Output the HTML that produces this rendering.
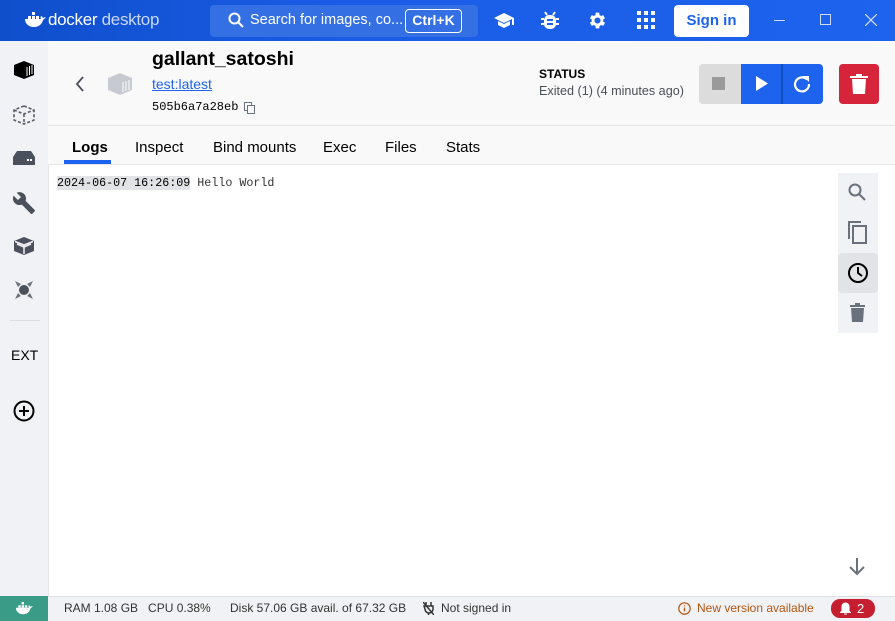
<!DOCTYPE html>
<html><head><meta charset="utf-8"><style>
*{box-sizing:border-box;margin:0;padding:0}
body{width:895px;height:621px;overflow:hidden;font-family:"Liberation Sans",sans-serif;background:#f9f9f9;position:relative;color:#000}
.abs{position:absolute}
.top{left:0;top:0;width:895px;height:41px;background:linear-gradient(90deg,#0f4fcc 0,#1a5ce6 40%,#1d63ed 100%)}
.side{left:0;top:41px;width:48px;height:555px;background:#f1f2f5}
.mono{font-family:"Liberation Mono","DejaVu Sans Mono",monospace}
</style></head><body>
<div class="abs top">
  <svg class="abs" style="left:24px;top:12px" width="22" height="16" viewBox="0 0 22 16"><path d="M1 8h18c1-1 2-2 3-2-1-1-2-1-3 0-1-2-2-2-2-2-1 2 0 3 0 3H1c0 4 3 8 9 8 5 0 8-3 9-7z" fill="#fff"/><rect x="4" y="4" width="3" height="3" fill="#fff"/><rect x="8" y="4" width="3" height="3" fill="#fff"/><rect x="12" y="4" width="3" height="3" fill="#fff"/><rect x="8" y="0" width="3" height="3" fill="#fff"/></svg>
  <div class="abs" style="left:48px;top:10px;font-size:17px;color:#fff;letter-spacing:-0.3px">docker <span style="color:#c9d8f7">desktop</span></div>
  <div class="abs" style="left:210px;top:5px;width:268px;height:32px;background:#3470e4;border-radius:4px"></div>
  <svg class="abs" style="left:228px;top:12px" width="16" height="16" viewBox="0 0 16 16"><circle cx="6.5" cy="6.5" r="5" stroke="#fff" stroke-width="2" fill="none"/><path d="M10 10l5 5" stroke="#fff" stroke-width="2"/></svg>
  <div class="abs" style="left:250px;top:12px;font-size:14.5px;color:#fff">Search for images, co...</div>
  <div class="abs" style="left:405px;top:9px;width:57px;height:24px;border:1.5px solid #fff;border-radius:4px;font-size:14px;font-weight:bold;color:#fff;text-align:center;line-height:21px">Ctrl+K</div>
  <svg class="abs" style="left:494px;top:11px" width="20" height="18" viewBox="0 0 20 18"><path d="M10 2L0 7l10 5 8-4v6h2V7z M4 10v4l6 3 6-3v-4l-6 3z" fill="#fff"/></svg>
  <svg class="abs" style="left:541px;top:10px" width="18" height="20" viewBox="0 0 18 20"><rect x="3" y="5" width="12" height="14" rx="5" fill="#fff"/><path d="M0 9h3M15 9h3M0 14h3M15 14h3M4 2l2 3M14 2l-2 3" stroke="#fff" stroke-width="2"/><path d="M6 10h6M6 14h6" stroke="#1d63ed" stroke-width="2"/></svg>
  <svg class="abs" style="left:587px;top:10px" width="21" height="21" viewBox="0 0 24 24"><path fill="#fff" d="M19.4 13a7.5 7.5 0 000-2l2.1-1.6-2-3.5-2.5 1a7 7 0 00-1.7-1L15 3h-4l-.4 2.9a7 7 0 00-1.7 1l-2.5-1-2 3.5L6.5 11a7.5 7.5 0 000 2l-2.1 1.6 2 3.5 2.5-1a7 7 0 001.7 1L11 21h4l.4-2.9a7 7 0 001.7-1l2.5 1 2-3.5zM13 15.5a3.5 3.5 0 110-7 3.5 3.5 0 010 7z" transform="translate(-1 0)"/></svg>
  <svg class="abs" style="left:637px;top:11px" width="18" height="18" viewBox="0 0 18 18"><g fill="#fff"><rect x="0" y="0" width="4" height="4"/><rect x="7" y="0" width="4" height="4"/><rect x="14" y="0" width="4" height="4"/><rect x="0" y="7" width="4" height="4"/><rect x="7" y="7" width="4" height="4"/><rect x="14" y="7" width="4" height="4"/><rect x="0" y="14" width="4" height="4"/><rect x="7" y="14" width="4" height="4"/><rect x="14" y="14" width="4" height="4"/></g></svg>
  <div class="abs" style="left:674px;top:5px;width:75px;height:32px;background:#fff;border-radius:4px;color:#1d63ed;font-weight:bold;font-size:15px;text-align:center;line-height:32px">Sign in</div>
  <div class="abs" style="left:774px;top:20px;width:11px;height:1px;background:#cfdcf9"></div>
  <div class="abs" style="left:820px;top:14px;width:11px;height:11px;border:1px solid #cfdcf9"></div>
  <svg class="abs" style="left:865px;top:14px" width="12" height="12"><path d="M0 0L12 12M12 0L0 12" stroke="#cfdcf9" stroke-width="1.3"/></svg>
</div>
<div class="abs side">
  <svg class="abs" style="left:13px;top:19px" width="22" height="20" viewBox="0 0 22 20"><path d="M11 1l10 4v10l-10 4-10-4V5z" fill="#000"/><path d="M14 7v9M16.5 6v9M19 5v9" stroke="#fff" stroke-width="1"/></svg>
  <svg class="abs" style="left:13px;top:64px" width="22" height="20" viewBox="0 0 22 20"><path d="M11 1l10 4v10l-10 4-10-4V5zM1 5l10 4 10-4M11 9v10" stroke="#555b66" stroke-width="1.6" fill="none" stroke-dasharray="3 2"/></svg>
  <svg class="abs" style="left:13px;top:110px" width="22" height="14" viewBox="0 0 22 14"><path d="M4 0h14l4 6v8H0V6z" fill="#4b515c"/><rect x="14" y="8" width="2" height="2" fill="#fff"/><rect x="17" y="8" width="2" height="2" fill="#fff"/></svg>
  <svg class="abs" style="left:12px;top:150px" width="24" height="24" viewBox="0 0 24 24"><path d="M22.7 19l-9.1-9.1c.9-2.3.4-5-1.5-6.9-2-2-5-2.4-7.4-1.3L9 6 6 9 1.6 4.7C.4 7.1.9 10.1 2.9 12.1c1.9 1.9 4.6 2.4 6.9 1.5l9.1 9.1c.4.4 1 .4 1.4 0l2.3-2.3c.5-.4.5-1.1.1-1.4z" fill="#4b515c"/></svg>
  <svg class="abs" style="left:13px;top:195px" width="22" height="20" viewBox="0 0 22 20"><path d="M11 1l10 4v10l-10 4-10-4V5z" fill="#4b515c"/><path d="M11 9L2 5.5M11 9l9-3.5M11 9v9" stroke="#f1f2f5" stroke-width="1.5"/><path d="M4 8l7 3 7-3" stroke="#f1f2f5" stroke-width="1.5" fill="none"/></svg>
  <svg class="abs" style="left:13px;top:238px" width="22" height="22" viewBox="0 0 22 22"><circle cx="11" cy="11" r="5" fill="#4b515c"/><path d="M2 2l6 3-3 3zM20 2l-3 6-3-3zM2 20l3-6 3 3zM20 20l-6-3 3-3z" fill="#4b515c" opacity=".8"/></svg>
  <div class="abs" style="left:10px;top:279px;width:30px;height:1px;background:#dcdde2"></div>
  <div class="abs" style="left:11px;top:306px;font-size:14px;color:#000">EXT</div>
  <svg class="abs" style="left:13px;top:359px" width="22" height="22" viewBox="0 0 22 22"><circle cx="11" cy="11" r="9.5" stroke="#000" stroke-width="2" fill="none"/><path d="M11 6v10M6 11h10" stroke="#000" stroke-width="2"/></svg>
</div>
<div class="abs" style="left:48px;top:41px;width:847px;height:85px;background:#f9f9f9;border-bottom:1px solid #e6e6e8"></div>
<svg class="abs" style="left:75px;top:76px" width="10" height="16"><path d="M8 1L2 8l6 7" stroke="#4b515c" stroke-width="1.8" fill="none"/></svg>
<svg class="abs" style="left:107px;top:72px" width="26" height="24" viewBox="0 0 26 24"><path d="M13 1l12 5v12l-12 5-12-5V6z" fill="#c7cbd1"/><path d="M16 10v10M19 9v10M22 8v10" stroke="#fff" stroke-width="1"/></svg>
<div class="abs" style="left:152px;top:48px;font-size:19.5px;font-weight:bold">gallant_satoshi</div>
<div class="abs" style="left:152px;top:76px;font-size:14px;color:#1d63ed;text-decoration:underline">test:latest</div>
<div class="abs mono" style="left:152px;top:100px;font-size:12px">505b6a7a28eb</div>
<svg class="abs" style="left:244px;top:102px" width="11" height="12"><rect x="0.5" y="0.5" width="7" height="8" fill="none" stroke="#6b717c"/><rect x="3.5" y="3.5" width="7" height="8" fill="#f9f9f9" stroke="#6b717c"/></svg>
<div class="abs" style="left:539px;top:67px;font-size:12px;font-weight:bold">STATUS</div>
<div class="abs" style="left:539px;top:84px;font-size:12.6px;color:#4b4f58">Exited (1) (4 minutes ago)</div>
<div class="abs" style="left:699px;top:64px;width:42px;height:40px;background:#dcdcdc;border-radius:4px 0 0 4px"></div>
<div class="abs" style="left:712px;top:77px;width:13px;height:13px;background:#9a9a9a"></div>
<div class="abs" style="left:741px;top:64px;width:82px;height:40px;background:#1d63ed;border-radius:0 4px 4px 0"></div>
<div class="abs" style="left:781px;top:64px;width:2px;height:40px;background:#0f4fc2"></div>
<svg class="abs" style="left:756px;top:76px" width="12" height="15"><path d="M0 0l12 7.5L0 15z" fill="#fff"/></svg>
<svg class="abs" style="left:792px;top:74px" width="20" height="20" viewBox="0 0 20 20"><path d="M15 5.5A7 7 0 1 0 17 10" stroke="#fff" stroke-width="2.2" fill="none"/><path d="M11 2h6v6z" fill="#fff"/></svg>
<div class="abs" style="left:839px;top:64px;width:40px;height:40px;background:#d6243a;border-radius:4px"></div>
<svg class="abs" style="left:850px;top:74px" width="18" height="20"><rect x="0" y="2" width="18" height="2" fill="#fff"/><rect x="6" y="0" width="6" height="3" fill="#fff"/><path d="M2 5h14l-1 15H3z" fill="#fff"/></svg>
<div class="abs" style="left:72px;top:139px;font-size:15px;font-weight:bold">Logs</div>
<div class="abs" style="left:64px;top:160px;width:47px;height:4px;background:#1d63ed"></div>
<div class="abs" style="left:135px;top:139px;font-size:15px">Inspect</div>
<div class="abs" style="left:213px;top:139px;font-size:15px">Bind mounts</div>
<div class="abs" style="left:323px;top:139px;font-size:15px">Exec</div>
<div class="abs" style="left:385px;top:139px;font-size:15px">Files</div>
<div class="abs" style="left:446px;top:139px;font-size:15px">Stats</div>
<div class="abs" style="left:48px;top:164px;width:847px;height:432px;background:#fff;border-top:1px solid #e6e6e8;border-left:1px solid #e6e6e8"></div>
<div class="abs mono" style="left:57px;top:175px;font-size:11.7px;line-height:16px;white-space:pre;color:#333"><span style="background:#e2e3e6;color:#000">2024-06-07 16:26:09</span> Hello World</div>
<div class="abs" style="left:838px;top:173px;width:40px;height:160px;background:#f1f2f5"></div>
<svg class="abs" style="left:848px;top:183px" width="18" height="18"><circle cx="7" cy="7" r="5.5" stroke="#6b717c" stroke-width="2" fill="none"/><path d="M11 11l6 6" stroke="#6b717c" stroke-width="2"/></svg>
<svg class="abs" style="left:848px;top:221px" width="20" height="24"><path d="M1 18V1h12" stroke="#6b717c" stroke-width="2" fill="none"/><rect x="5" y="5" width="13" height="17" stroke="#6b717c" stroke-width="2" fill="none"/></svg>
<div class="abs" style="left:838px;top:253px;width:40px;height:40px;background:#e2e3e6;border-radius:4px"></div>
<svg class="abs" style="left:847px;top:262px" width="22" height="22"><circle cx="11" cy="11" r="9" stroke="#000" stroke-width="2" fill="none"/><path d="M11 5v6l4 3" stroke="#000" stroke-width="2" fill="none"/></svg>
<svg class="abs" style="left:850px;top:303px" width="15" height="19"><rect x="0" y="2" width="15" height="2" fill="#6b717c"/><rect x="5" y="0" width="5" height="3" fill="#6b717c"/><path d="M1 5h13l-1 14H2z" fill="#6b717c"/></svg>
<svg class="abs" style="left:849px;top:558px" width="16" height="18"><path d="M8 0v16M1 9l7 7 7-7" stroke="#6b717c" stroke-width="2" fill="none"/></svg>
<div class="abs" style="left:0;top:596px;width:895px;height:25px;background:#f1f2f5;border-top:1px solid #e0e0e4"></div>
<div class="abs" style="left:0;top:596px;width:48px;height:25px;background:#3a9c86"></div>
<svg class="abs" style="left:15px;top:602px" width="18" height="13" viewBox="0 0 22 16"><path d="M1 8h18c1-1 2-2 3-2-1-1-2-1-3 0-1-2-2-2-2-2-1 2 0 3 0 3H1c0 4 3 8 9 8 5 0 8-3 9-7z" fill="#fff"/><rect x="4" y="4" width="3" height="3" fill="#fff"/><rect x="8" y="4" width="3" height="3" fill="#fff"/><rect x="12" y="4" width="3" height="3" fill="#fff"/><rect x="8" y="0" width="3" height="3" fill="#fff"/></svg>
<div class="abs" style="left:64px;top:601px;font-size:12px;color:#333;white-space:pre">RAM 1.08 GB   CPU 0.38%</div>
<div class="abs" style="left:230px;top:601px;font-size:12px;color:#333">Disk 57.06 GB avail. of 67.32 GB</div>
<svg class="abs" style="left:423px;top:602px" width="11" height="13"><path d="M3 0v4M8 0v4M1 4h9v3a4 4 0 01-8 0zM5.5 11v2M0 0l11 13" stroke="#333" stroke-width="1.5" fill="none"/></svg>
<div class="abs" style="left:441px;top:601px;font-size:12px;color:#333">Not signed in</div>
<svg class="abs" style="left:678px;top:602px" width="13" height="13"><circle cx="6.5" cy="6.5" r="5.7" stroke="#b5540f" stroke-width="1.2" fill="none"/><path d="M6.5 5.5v4M6.5 3.3v1" stroke="#b5540f" stroke-width="1.3"/></svg>
<div class="abs" style="left:697px;top:601px;font-size:12px;color:#b5540f">New version available</div>
<div class="abs" style="left:831px;top:599px;width:44px;height:19px;background:#c41e30;border-radius:9px;color:#fff;font-size:13px;line-height:19px;padding-left:26px">2</div>
<svg class="abs" style="left:840px;top:602px" width="11" height="13"><path d="M5.5 1a3.5 3.5 0 013.5 3.5V9l1.5 1.5H.5L2 9V4.5A3.5 3.5 0 015.5 1zM4 12h3" stroke="#fff" fill="#fff"/></svg>
</body></html>
